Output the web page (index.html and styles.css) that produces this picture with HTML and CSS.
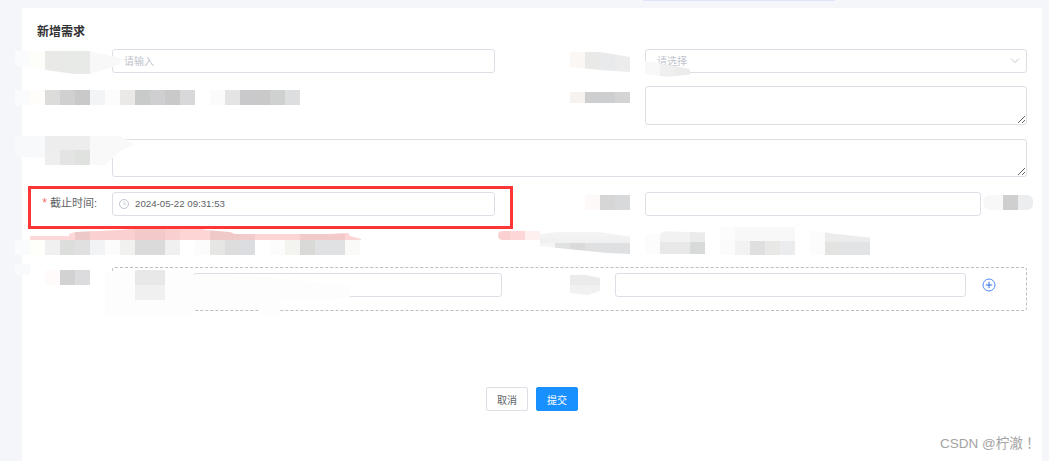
FILE: index.html
```html
<!DOCTYPE html>
<html lang="zh-CN">
<head>
<meta charset="utf-8">
<title>新增需求</title>
<link rel="stylesheet" href="styles.css">
</head>
<body>
<div class="topbar"><div class="glow"></div></div>
<main class="card">
  <h1 class="title">新增需求</h1>
  <form class="form">
    <div class="row row-1">
      <div class="label"></div>
      <input class="input" placeholder="请输入">
      <div class="label"></div>
      <div class="control">
        <input class="input input-select" placeholder="请选择">
        <svg class="chevron" viewBox="0 0 10 6" width="10" height="6"><path d="M1 .5 5 4.500 9 .5" fill="none" stroke="#c0c4cc" stroke-width="1"/></svg>
      </div>
    </div>
    <div class="row row-2">
      <div class="label"></div>
      <div></div>
      <div class="label"></div>
      <textarea class="textarea ta-small"></textarea>
    </div>
    <div class="row-wide">
      <div class="label"></div>
      <textarea class="textarea ta-wide"></textarea>
    </div>
    <div class="row row-4">
      <label class="label label-text"><span class="star">*</span> 截止时间:</label>
      <div class="control">
        <svg class="clock" viewBox="0 0 12 12" width="12" height="12"><circle cx="6" cy="6" r="4.500" fill="none" stroke="#c0c4cc"/><path d="M6 3.300V6.300H8.300" fill="none" stroke="#c0c4cc" stroke-width=".8"/></svg>
        <input class="input input-date" value="2024-05-22 09:31:53">
      </div>
      <div class="label"></div>
      <div class="field-suffix"><input class="input"></div>
    </div>
    <div class="dashed">
      <input class="input dash-first">
      <input class="input dash-second">
      <svg class="plus" viewBox="0 0 14 14" width="14" height="14"><circle cx="7" cy="7" r="6" fill="none" stroke="#4f8bff"/><path d="M3.800 7H10.200M7 3.800V10.200" fill="none" stroke="#2f6fe0"/></svg>
    </div>
    <div class="actions">
      <button type="button" class="btn">取消</button>
      <button type="button" class="btn btn-primary">提交</button>
    </div>
  </form>
</main>

<div class="sm sm-name"></div>
<div class="sm sm-line2"></div>
<div class="sm sm-type"></div>
<div class="sm sm-select"></div>
<div class="sm sm-desc"></div>
<div class="sm sm-desc-wide"></div>
<div class="sm sm-owner"></div>
<div class="sm sm-suffix"></div>
<div class="sm sm-pink"></div>
<div class="sm sm-pink-right"></div>
<div class="sm sm-line5"></div>
<div class="sm sm-line5-r1"></div>
<div class="sm sm-line5-r2"></div>
<div class="sm sm-line5-r3"></div>
<div class="sm sm-line5-r4"></div>
<div class="sm sm-smear"></div>
<div class="sm sm-line6"></div>
<div class="sm sm-line6-mid"></div>
<div class="sm sm-line6-r"></div>

<div class="highlight"></div>
<div class="watermark" lang="zh-TW">CSDN @柠澈！</div>
</body>
</html>
```
FILE: styles.css
```css
* { box-sizing: border-box; }
html, body { height: 461px; overflow: hidden; }
body {
  margin: 0;
  background: #f5f6fa;
  font-family: "Liberation Sans", "Noto Sans CJK SC", sans-serif;
  font-size: 10px;
  color: #606266;
  position: relative;
}
.topbar { height: 8px; padding-left: 643px; }
.glow { width: 192px; height: 1px; background: #dfe6fb; box-shadow: 0 0 1px #e8edfb; }
.card { margin: 0 7px 0 22px; height: 453px; background: #fff; padding-top: 17px; }
.title { margin: 0 0 0 15px; font-size: 12px; line-height: 14px; font-weight: 700; color: #303133; }
.form { margin-top: 10px; }
.row { display: grid; grid-template-columns: 90px 383px 150px 382px; }
.row-1 { height: 24px; }
.row-2 { margin-top: 13px; height: 39px; }
.row-wide { margin-top: 14px; display: flex; height: 38px; }
.row-wide .label { width: 90px; }
.row-4 { margin-top: 15px; height: 24px; }
.label { line-height: 24px; }
.label-text { text-align: right; padding-right: 15px; font-size: 11px; line-height: 22px; white-space: nowrap; }
.star { color: #f56c6c; font-size: 12px; }
.control { position: relative; }
.input, .textarea {
  display: block;
  width: 100%;
  border: 1px solid #dcdfe6;
  border-radius: 3px;
  background: #fff;
  outline: 0;
  margin: 0;
  font: inherit;
  color: #606266;
}
.input { height: 24px; padding: 0 11px; }
.input::placeholder { color: #c0c4cc; opacity: 1; }
.input-date { padding: 0 0 1px 22px; font-size: 9.700px; }
.textarea { display: block; resize: both; padding: 0; }
.ta-small { width: 382px; height: 39px; }
.ta-wide { width: 915px; height: 38px; }
.field-suffix { width: 336px; }
.chevron { position: absolute; right: 7px; top: 9px; }
.clock { position: absolute; left: 6px; top: 6px; }
.dashed {
  margin: 51px 0 0 90px;
  width: 915px;
  height: 44px;
  border: 1px dashed #bdbdbd;
  border-radius: 3px;
  padding: 5px 0 0 80px;
  display: flex;
  align-items: flex-start;
}
.dash-first { width: 309px; }
.dash-second { width: 351px; margin-left: 113px; }
.plus { margin: 5px 0 0 16px; flex: none; }
.actions { margin-top: 76px; margin-left: 464px; display: flex; gap: 8px; }
.btn {
  width: 42px;
  height: 24px;
  padding: 0;
  border: 1px solid #dcdfe6;
  border-radius: 2px;
  background: #fff;
  font: inherit;
  color: #606266;
}
.btn-primary { background: #1890ff; border-color: #1890ff; color: #fff; }

/* Redaction smudges laid over the form */
.sm { position: absolute; }
.sm-name {
  left: 15px; top: 51px; width: 105px; height: 23px;
  clip-path: polygon(0 0, 70% 0, 100% 30%, 100% 60%, 72% 100%, 55% 100%, 20% 75%, 0 65%);
  background: linear-gradient(90deg, #fafbfd 0 15px, #fdfdfa 15px 30px, #e9e9e7 30px 45px, #e8eae8 45px 75px, #f8f8f8 75px 105px);
}
.sm-line2 {
  left: 15px; top: 90px; width: 285px; height: 15px;
  background: linear-gradient(90deg, #fafbfd 0 15px, #fefdfa 15px 30px, #dcdcda 30px 45px, #d0d0d0 45px 60px, #c9c9c9 60px 75px, #f3f4f6 75px 90px, #fbfcfb 90px 105px, #eae9e7 105px 120px, #c9caca 120px 135px, #cfcfd1 135px 150px, #c9c9c9 150px 165px, #d8d8da 165px 180px, #fff 180px 195px, #fbfbfb 195px 210px, #e4e4e4 210px 225px, #c9c9cb 225px 240px, #c9c9c9 240px 255px, #cfd1d0 255px 270px, #dddee0 270px 285px);
}
.sm-type {
  left: 570px; top: 52px; width: 60px; height: 20px;
  clip-path: polygon(0 0, 50% 0, 100% 25%, 100% 100%, 50% 90%, 0 75%);
  background: linear-gradient(90deg, #faf7f5 0 15px, #e9e9e7 15px 30px, #e9eaec 30px 45px, #ececec 45px 60px);
}
.sm-select {
  left: 645px; top: 61px; width: 45px; height: 16px;
  clip-path: polygon(0 0, 65% 30%, 100% 50%, 100% 85%, 50% 100%, 0 80%);
  background: linear-gradient(90deg, #f8f8f8 0 15px, #efefef 15px 30px, #ececec 30px 45px);
}
.sm-desc {
  left: 15px; top: 136px; width: 120px; height: 29px;
  clip-path: polygon(0 0, 88% 0, 100% 30%, 88% 50%, 75% 100%, 25% 100%, 25% 75%, 0 70%);
  background:
    linear-gradient(90deg, #f8f9fb 0 30px, #eee 30px 45px, #e4e4e4 45px 60px, #e0e2e0 60px 75px, #f8f9f8 75px 120px) 0 14px / 100% 15px no-repeat,
    linear-gradient(90deg, #f8f9fb 0 30px, #ededed 30px 75px, #f9f9f9 75px 120px) 0 0 / 100% 14px no-repeat;
}
.sm-desc-wide {
  left: 570px; top: 92px; width: 60px; height: 11px;
  background: linear-gradient(90deg, #f6f2ef 0 15px, #cdcecf 15px 45px, #d4d4d4 45px 60px);
}
.sm-owner {
  left: 585px; top: 195px; width: 45px; height: 15px;
  background: linear-gradient(90deg, #fdf9f8 0 15px, #d6d6d6 15px 30px, #d8d9da 30px 45px);
}
.sm-suffix {
  left: 983px; top: 195px; width: 50px; height: 15px;
  border-radius: 8px 6px 6px 8px;
  background: linear-gradient(90deg, #f8f8f8 0 20px, #cfcfcf 20px 35px, #ecedef 35px 50px);
}
.sm-pink {
  left: 30px; top: 227px; width: 331px; height: 13px;
  clip-path: polygon(0 9px, 39px 9px, 39px 7px, 45px 5px, 90px 3px, 110px 1px, 120px 0, 170px 0, 175px 3px, 200px 5px, 205px 7px, 300px 7px, 318px 6px, 320px 9px, 331px 12px, 331px 13px, 0 13px);
  background: linear-gradient(90deg, #fcd9d8 0 45px, #ecc8c8 45px 60px, #fbd0d0 60px 105px, #f3c9c9 105px 135px, #f9cfcf 135px 150px, #fdd5d5 150px 180px, #efc8c8 180px 210px, #f2cccc 210px 225px, #fdd5d5 225px 270px, #f2caca 270px 315px, #fdd5d5 315px 331px);
}
.sm-pink-right {
  left: 498px; top: 231px; width: 42px; height: 9px;
  border-radius: 5px 0 0 5px;
  background: linear-gradient(90deg, #fbd0d0 0 12px, #fdd7d7 12px 27px, #fef0ee 27px 42px);
}
.sm-line5 {
  left: 15px; top: 240px; width: 345px; height: 15px;
  background: linear-gradient(90deg, #fafbfd 0 15px, #fefefb 15px 30px, #f0f0f0 30px 45px, #dcdedc 45px 60px, #e0e0e0 60px 75px, #f2f3f5 75px 90px, #fbfcfb 90px 105px, #f1f1f0 105px 120px, #dadada 120px 150px, #f0f0f0 150px 165px, #fff 165px 180px, #fbfcfb 180px 195px, #e6e6e4 195px 210px, #dddddd 210px 225px, #dcdde0 225px 240px, #fff 240px 255px, #fbfcfb 255px 270px, #f3f3f0 270px 285px, #d9dad8 285px 300px, #e0e1e3 300px 330px, #fafbf9 330px 345px);
}
.sm-line5-r1 {
  left: 540px; top: 232px; width: 90px; height: 22px;
  clip-path: polygon(0 10%, 20% 0, 65% 0, 100% 20%, 100% 100%, 75% 95%, 0 65%);
  background:
    linear-gradient(90deg, #f5f5f5 0 15px, #e0e2e1 15px 30px, #dadada 30px 45px, #dfe0e2 45px 90px) 0 11px / 100% 11px no-repeat,
    linear-gradient(#f4f4f4, #f0f0f0) 0 0 / 100% 11px no-repeat;
}
.sm-line5-r2 {
  left: 645px; top: 230px; width: 60px; height: 24px;
  clip-path: polygon(0 20%, 25% 15%, 35% 5%, 100% 10%, 100% 100%, 0 100%);
  background:
    linear-gradient(90deg, #fbfcfb 0 15px, #e8e8e8 15px 45px, #d8d9d9 45px 60px) 0 12px / 100% 12px no-repeat,
    linear-gradient(90deg, #fbfcfb 0 15px, #f2f2f2 15px 45px, #ebebeb 45px 60px) 0 0 / 100% 12px no-repeat;
}
.sm-line5-r3 {
  left: 720px; top: 227px; width: 75px; height: 28px;
  background:
    linear-gradient(90deg, #fbfbfb 0 15px, #f2f2f2 15px 30px, #dfdfdf 30px 45px, #e8e8e6 45px 60px, #ebecee 60px 75px) 0 14px / 100% 14px no-repeat,
    linear-gradient(90deg, #fcfcfc 0 15px, #f8f8f8 15px 75px) 0 0 / 100% 14px no-repeat;
}
.sm-line5-r4 {
  left: 810px; top: 230px; width: 60px; height: 25px;
  clip-path: polygon(0 0, 40% 15%, 100% 30%, 100% 100%, 0 100%);
  background:
    linear-gradient(90deg, #fbfcfb 0 15px, #e3e3e1 15px 30px, #e2e3e4 30px 60px) 0 12px / 100% 13px no-repeat,
    linear-gradient(90deg, #fbfcfb 0 15px, #ececec 15px 60px) 0 0 / 100% 12px no-repeat;
}
.sm-smear {
  left: 105px; top: 268px; width: 245px; height: 47px;
  clip-path: polygon(0 3px, 88px 3px, 88px 7px, 150px 8px, 210px 14px, 245px 18px, 245px 30px, 175px 32px, 175px 47px, 155px 47px, 155px 42px, 90px 42px, 90px 47px, 0 47px);
  background: #fdfdfd;
}
.sm-line6 {
  left: 15px; top: 264px; width: 75px; height: 21px;
  clip-path: polygon(0 0, 20% 0, 20% 28%, 100% 28%, 100% 100%, 40% 100%, 40% 70%, 0 50%);
  background:
    linear-gradient(90deg, transparent 0 30px, #fefbfa 30px 45px, #d2d2d2 45px 60px, #dcdcde 60px 75px) 0 6px / 100% 15px no-repeat,
    linear-gradient(#f9fafc, #f9fafc) 0 0 / 15px 11px no-repeat;
}
.sm-line6-mid {
  left: 135px; top: 270px; width: 30px; height: 30px;
  background: linear-gradient(#e8e8e8 0 15px, #f0f0f0 15px 30px);
}
.sm-line6-r {
  left: 570px; top: 275px; width: 30px; height: 20px;
  clip-path: polygon(0 0, 55% 0, 100% 15%, 100% 80%, 60% 100%, 0 90%);
  background: linear-gradient(#ebebeb 0 10px, #f1f1f1 10px 20px);
}

.highlight {
  position: absolute;
  left: 28px; top: 186px; width: 485px; height: 43px;
  border: 3px solid #ff3636;
}
.watermark {
  position: absolute;
  left: 940px; top: 435px;
  font-family: "Liberation Sans", "Noto Sans CJK TC", sans-serif;
  font-size: 13.500px;
  line-height: 17px;
  color: #a3a3a3;
  white-space: nowrap;
}
```
